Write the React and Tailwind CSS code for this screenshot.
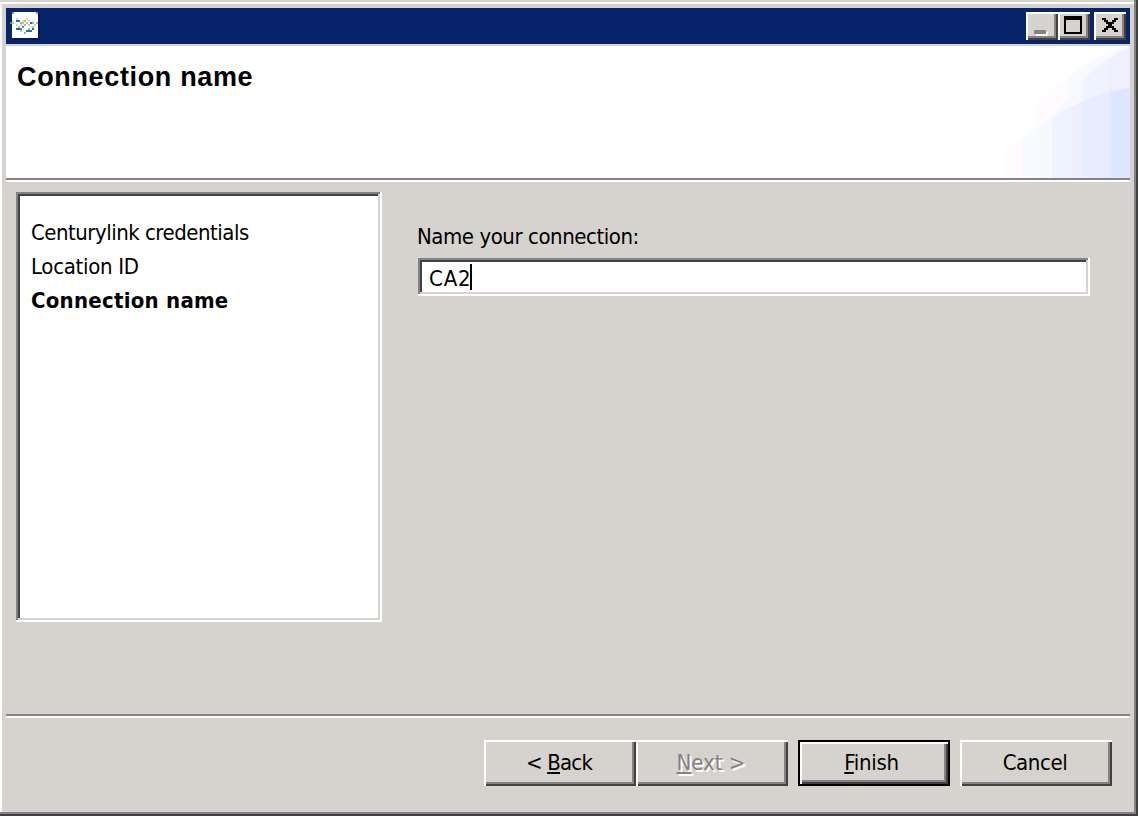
const raised =
  "shadow-[inset_2px_2px_#fff,inset_-2px_-2px_#424142,inset_-4px_-4px_#848284]";

function TitleButton({ children, label, className = "" }) {
  return (
    <button
      aria-label={label}
      className={`h-7 w-8 bg-[#d6d3ce] ${raised} ${className}`}
    >
      <svg className="block" width="32" height="28" shapeRendering="crispEdges">
        {children}
      </svg>
    </button>
  );
}

function AppIcon() {
  const dots = [
    [2, 0, "#8096bd"], [26, 0, "#8096bd"],
    [6, 6, "#c5dcdf"], [16, 6, "#d9d6a0"], [2, 8, "#e8ead0"],
    [6, 8, "#267492"], [8, 8, "#267492"], [12, 8, "#dcd9a4"], [14, 8, "#c9b65c"], [18, 8, "#c9dde0"], [22, 8, "#dfeaea"],
    [0, 10, "#7b8579"], [2, 10, "#d3c77c"], [4, 10, "#efeed8"], [10, 10, "#8fb5bd"], [12, 10, "#d3c77c"],
    [16, 10, "#c5bd78"], [20, 10, "#267492"], [22, 10, "#8bb7c5"], [26, 10, "#a9b89b"],
    [6, 12, "#deddb4"], [10, 12, "#c5d9dc"], [14, 12, "#c9b65c"], [18, 12, "#b9ced2"], [24, 12, "#d9d6a0"],
    [8, 14, "#a8c8d1"], [12, 14, "#669aac"], [20, 14, "#e9e5c4"], [22, 14, "#a8c8d1"],
    [6, 16, "#267492"], [8, 16, "#176684"], [10, 16, "#4a8ca3"], [18, 16, "#8fb5bd"], [22, 16, "#267492"],
    [10, 18, "#a9cbd5"], [16, 18, "#277490"], [18, 18, "#277490"], [20, 18, "#277490"], [14, 20, "#8ab0c2"],
  ];
  return (
    <svg width="32" height="32" viewBox="0 0 32 32" shapeRendering="crispEdges">
      <rect x="4" y="2" width="26" height="26" fill="#031c51" />
      <rect x="2" y="0" width="26" height="26" fill="#fff" />
      {dots.map(([x, y, c]) => (
        <rect key={`${x}-${y}`} x={x} y={y} width="2" height="2" fill={c} />
      ))}
    </svg>
  );
}

function Swoosh() {
  return (
    <svg width="130" height="132" viewBox="0 0 130 132">
      <defs>
        <clipPath id="outer">
          <path d="M34 132 V62 Q74 18 126 0 H130 V132Z" />
        </clipPath>
        <clipPath id="middle">
          <path d="M50 77 Q84 20 130 1 V132 H50Z" />
        </clipPath>
        <clipPath id="lower">
          <path d="M6 132 V106 Q68 50 130 42 V132Z" />
        </clipPath>
      </defs>
      <g shapeRendering="crispEdges">
        <g clipPath="url(#outer)">
          <rect x="34" width="34" height="132" fill="#fffbff" />
          <rect x="68" width="62" height="132" fill="#f7fbff" />
        </g>
        <g clipPath="url(#middle)">
          <rect x="50" width="32" height="132" fill="#f7f9ff" />
          <rect x="82" width="26" height="132" fill="#eff3ff" />
          <rect x="108" width="22" height="132" fill="#efefff" />
        </g>
        <g clipPath="url(#lower)">
          <rect x="6" width="16" height="132" fill="#fffbff" />
          <rect x="22" width="16" height="132" fill="#f7fbff" />
          <rect x="38" width="14" height="132" fill="#f7f9ff" />
          <rect x="52" width="20" height="132" fill="#eff3ff" />
          <rect x="72" width="10" height="132" fill="#efedff" />
          <rect x="82" width="28" height="132" fill="#e7edff" />
          <rect x="110" width="2" height="132" fill="#e7e5fb" />
          <rect x="112" width="18" height="132" fill="#dee7ff" />
        </g>
      </g>
    </svg>
  );
}

function Key({ children }) {
  return (
    <span className="underline decoration-2 underline-offset-2 [text-decoration-skip-ink:none]">
      {children}
    </span>
  );
}

function Button({ children, className = "", look = raised, disabled }) {
  return (
    <button
      disabled={disabled}
      className={`h-[46px] w-[152px] bg-[#d6d3ce] whitespace-pre ${look} ${className}`}
    >
      {children}
    </button>
  );
}

export default function App() {
  return (
    <div className="flex h-[816px] w-[1138px] flex-col bg-[#d6d3ce] pt-2 pr-2 pb-1 pl-1.5 font-['DejaVu_Sans_Condensed','DejaVu_Sans',sans-serif] text-[22px] leading-[34px] font-normal tracking-[-0.5px] text-black [font-stretch:condensed] shadow-[inset_-2px_-2px_#424142,inset_-4px_-4px_#848284,inset_0_2px_#d6d3ce,inset_2px_4px_#fff]">
      <header className="flex h-9 shrink-0 items-start bg-[#08246b] pt-1 pr-1 pl-1">
        <AppIcon />
        <div className="ml-auto flex">
          <TitleButton label="Minimize">
            <rect x="10" y="20" width="12" height="4" fill="#fff" />
            <rect x="8" y="18" width="12" height="4" fill="#848284" />
          </TitleButton>
          <TitleButton label="Maximize">
            <path d="M6 4H24V22H6Z M8 8V20H22V8Z" fillRule="evenodd" />
          </TitleButton>
          <TitleButton label="Close" className="ml-1">
            <path d="M8 6h4v2h2v2h4v-2h2v-2h4v2h-2v2h-2v2h-2v2h2v2h2v2h2v2h-4v-2h-2v-2h-4v2h-2v2h-4v-2h2v-2h2v-2h2v-2h-2v-2h-2v-2h-2z" />
          </TitleButton>
        </div>
      </header>

      <section className="mt-0.5 flex h-[136px] shrink-0 justify-between border-b-2 border-white bg-white shadow-[inset_0_-2px_#848284]">
        <h1 className="pt-[14px] pl-[11px] font-['Liberation_Sans',sans-serif] text-[27px] font-bold tracking-[0.65px]">
          Connection name
        </h1>
        <Swoosh />
      </section>

      <main className="flex h-[532px] shrink-0 items-start pt-2.5 pl-2.5">
        <ul className="h-[430px] w-[366px] bg-white pt-[24px] pl-[15px] shadow-[inset_-2px_-2px_#fff,inset_2px_2px_#848284,inset_-4px_-4px_#d6d3ce,inset_4px_4px_#424142]">
          <li>Centurylink credentials</li>
          <li className="tracking-[-0.3px]">Location ID</li>
          <li className="font-bold tracking-[0.25px]">Connection name</li>
        </ul>
        <div className="ml-9 pt-[28px]">
          <label className="-ml-px block tracking-[-0.45px]">Name your connection:</label>
          <div className="mt-1 flex h-[38px] w-[672px] items-center bg-white pl-[11px] shadow-[inset_-2px_-2px_#fff,inset_2px_2px_#848284,inset_-4px_-4px_#d6d3ce,inset_4px_4px_#424142]">
            <span className="w-[41px] pt-[3px] tracking-[0.8px] whitespace-nowrap">CA2</span>
            <span className="h-[26px] w-0.5 bg-black" />
          </div>
        </div>
      </main>

      <footer className="flex border-t-2 border-[#848284] pt-6 pr-[18px] shadow-[inset_0_2px_#fff]">
        <Button className="ml-auto pr-0.5 tracking-[-0.8px]">
          {"< "}
          <Key>B</Key>ack
        </Button>
        <Button disabled className="pr-0.5 tracking-[0px] text-[#848284] [text-shadow:2px_2px_#fff]">
          <Key>N</Key>
          {"ext >"}
        </Button>
        <Button
          className="ml-2.5 pr-[5px] tracking-[-0.3px]"
          look="shadow-[inset_0_0_0_2px_#000,inset_4px_4px_#fff,inset_-4px_-4px_#424142,inset_-6px_-6px_#848284]"
        >
          <Key>F</Key>inish
        </Button>
        <Button className="ml-2.5 pr-0.5 tracking-[-0.4px]">Cancel</Button>
      </footer>
    </div>
  );
}
